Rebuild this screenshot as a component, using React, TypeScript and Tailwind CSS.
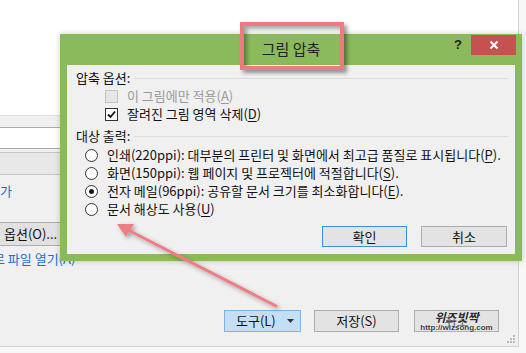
import React from 'react';

const font = "font-['Noto_Sans_CJK_KR','Noto_Sans',sans-serif]";

const U: React.FC<{ children: React.ReactNode }> = ({ children }) => (
  <span className="underline underline-offset-2">{children}</span>
);

const SectionTitle: React.FC<{ label: string }> = ({ label }) => (
  <div className="flex items-center h-[18px] pl-[9px] pr-[7px]">
    <span>{label}</span>
    <div className="flex-1 ml-[4px] h-px bg-[#dcdcdc]" />
  </div>
);

const Radio: React.FC<{ checked?: boolean; children: React.ReactNode }> = ({ checked, children }) => (
  <div className="flex items-center h-[18px] pl-[18px]">
    <span className="w-[13px] h-[13px] rounded-full border border-[#333] bg-white flex items-center justify-center">
      {checked && <span className="w-[5px] h-[5px] rounded-full bg-[#1a1a1a]" />}
    </span>
    <span className="ml-[9px] whitespace-nowrap">{children}</span>
  </div>
);

const WinButton: React.FC<{ children: React.ReactNode; primary?: boolean; className?: string }> = ({
  children,
  primary,
  className = '',
}) => (
  <div
    className={`h-[21px] flex items-center justify-center bg-[#e3e3e3] border ${
      primary ? 'border-[#3d8ee0]' : 'border-[#adadad]'
    } ${className}`}
  >
    {children}
  </div>
);

const CompressDialog: React.FC = () => (
  <div className="absolute left-[60px] top-[34px] w-[462px] h-[227px] bg-[#8aba5b] flex flex-col px-[7px] pb-[7px] shadow-[0_0_6px_rgba(0,0,0,0.2)]">
    <div className="h-[31px] flex">
      <div className="flex-1" />
      <div className="text-[15px] text-[#222] leading-[28px] pt-[1px]">그림 압축</div>
      <div className="flex-1 flex justify-end items-start">
        <span className="mt-[2px] mr-[9px] text-[13px] font-bold text-[#222] leading-[18px] font-['Liberation_Sans',sans-serif]">?</span>
        <div className="mt-[1px] mr-[-1px] w-[45px] h-[20px] bg-[#c75050] flex items-center justify-center">
          <svg width="10" height="10" viewBox="0 0 10 10">
            <path d="M1.5 1.5 L8.5 8.5 M8.5 1.5 L1.5 8.5" stroke="#fff" strokeWidth="2" />
          </svg>
        </div>
      </div>
    </div>
    <div className="flex-1 bg-[#f0f0f0] text-[13px] text-[#111] leading-[18px] pt-[4px]">
      <SectionTitle label="압축 옵션:" />
      <div className="flex items-center h-[18px] pl-[38px] text-[#9a9a9a]">
        <span className="w-[13px] h-[13px] border border-[#c4c4c4] bg-[#e6e6e6]" />
        <span className="ml-[9px]">
          이 그림에만 적용(<U>A</U>)
        </span>
      </div>
      <div className="flex items-center h-[18px] pl-[38px]">
        <span className="w-[13px] h-[13px] border border-[#333] bg-white flex items-center justify-center">
          <svg width="9" height="9" viewBox="0 0 9 9">
            <path d="M1 4.5 L3.5 7 L8 1.5" stroke="#111" strokeWidth="1.8" fill="none" />
          </svg>
        </span>
        <span className="ml-[9px]">
          잘려진 그림 영역 삭제(<U>D</U>)
        </span>
      </div>
      <div className="mt-[4px]">
        <SectionTitle label="대상 출력:" />
      </div>
      <div className="mt-[1px]">
        <Radio>
          인쇄(220ppi): 대부분의 프린터 및 화면에서 최고급 품질로 표시됩니다(<U>P</U>).
        </Radio>
        <Radio>
          화면(150ppi): 웹 페이지 및 프로젝터에 적절합니다(<U>S</U>).
        </Radio>
        <Radio checked>
          전자 메일(96ppi): 공유할 문서 크기를 최소화합니다(<U>E</U>).
        </Radio>
        <Radio>
          문서 해상도 사용(<U>U</U>)
        </Radio>
      </div>
      <div className="mt-[8px] flex justify-end pr-[8px] gap-[14px]">
        <WinButton primary className="w-[85px]">확인</WinButton>
        <WinButton className="w-[86px]">취소</WinButton>
      </div>
    </div>
  </div>
);

const App: React.FC = () => {
  return (
    <div className={`relative w-[526px] h-[353px] overflow-hidden bg-[#f7f7f7] ${font} text-[13px] text-[#111]`}>
      <div className="w-[519px] h-[347px] border-r border-b border-[#d4d4d4] bg-[#f0f0f0] flex flex-col">
        <div className="h-[116px] bg-white border-b border-[#e2e2e2] shrink-0" />
        <div className="mt-[11px] h-[22px] bg-white border-y border-[#acacac] shrink-0" />
        <div className="mt-[3px] h-[23px] bg-[#e8e8e8] border-y border-[#c6c6c6] shrink-0" />
        <div className="mt-[8px] leading-[16px] text-[#1f6fcf]">가</div>
        <div className="mt-[23px] w-[70px] h-[24px] border border-[#adadad] border-l-0 bg-[#e1e1e1] flex items-center pl-[4px] leading-[16px] whitespace-nowrap">
          옵션(O)...
        </div>
        <div className="mt-[5px] ml-[-7px] leading-[16px] text-[#1f6fcf] whitespace-nowrap">로 파일 열기(A)</div>
        <div className="mt-auto flex justify-end pr-[19px] pb-[14px] leading-[16px]">
          <div className="w-[77px] h-[22px] bg-[#c4dff5] border border-[#7db4e6] flex items-center pl-[11px] pr-[6px]">
            <span className="flex-1">도구(L)</span>
            <svg width="7" height="4" viewBox="0 0 7 4">
              <path d="M0 0 L7 0 L3.5 4 Z" fill="#333" />
            </svg>
          </div>
          <div className="ml-[13px] w-[85px] h-[22px] bg-[#e3e3e3] border border-[#adadad] flex items-center justify-center">
            저장(S)
          </div>
          <div className="relative ml-[15px] w-[85px] h-[22px] bg-[#e3e3e3] border border-[#adadad] flex items-center justify-center">
            <span className="text-[#555]">취소</span>
            <div className="absolute inset-0 flex flex-col items-center justify-center leading-none pt-[1px]">
              <span className="text-[12px] font-bold italic text-[#2a2a2a] [text-shadow:0_0_2px_#fff]">위즈빗짝</span>
              <span className="mt-[1px] text-[8px] font-bold text-[#3a3a3a] [text-shadow:0_0_2px_#fff] font-['Liberation_Sans',sans-serif]">
                http://wizsong.com
              </span>
            </div>
          </div>
        </div>
      </div>
      <svg className="absolute left-[504px] top-[334px]" width="12" height="12" viewBox="0 0 12 12">
        <rect x="9" y="1" width="2" height="2" fill="#b8b8b8" />
        <rect x="6" y="4" width="2" height="2" fill="#b8b8b8" />
        <rect x="9" y="4" width="2" height="2" fill="#b8b8b8" />
        <rect x="3" y="7" width="2" height="2" fill="#b8b8b8" />
        <rect x="6" y="7" width="2" height="2" fill="#b8b8b8" />
        <rect x="9" y="7" width="2" height="2" fill="#b8b8b8" />
      </svg>

      <CompressDialog />

      <div className="absolute left-[240px] top-[22px] w-[104px] h-[48px] border-4 border-[#ec7b80] shadow-[3px_3px_4px_rgba(0,0,0,0.4),inset_3px_3px_4px_rgba(0,0,0,0.35)]" />

      <svg className="absolute left-0 top-0" width="526" height="353" viewBox="0 0 526 353">
        <defs>
          <filter id="sh" x="-20%" y="-20%" width="140%" height="140%">
            <feDropShadow dx="2" dy="2" stdDeviation="2" floodColor="#000" floodOpacity="0.35" />
          </filter>
        </defs>
        <g filter="url(#sh)">
          <line x1="128" y1="230" x2="276" y2="306" stroke="#ee7d84" strokeWidth="3" strokeLinecap="round" />
          <path d="M117 224 L134 224 L126 237 Z" fill="#ee7d84" />
        </g>
      </svg>
    </div>
  );
};

export default App;
